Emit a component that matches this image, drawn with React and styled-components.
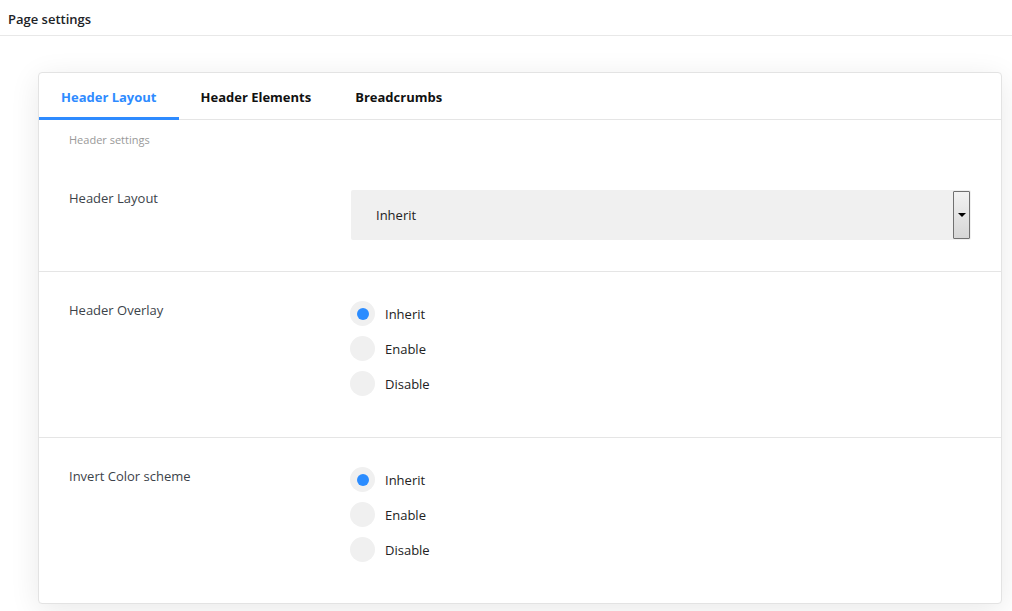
import { createGlobalStyle, styled } from 'styled-components';

const GlobalStyle = createGlobalStyle`
    html, body {
        margin: 0;
        padding: 0;
        background: #ffffff;
        font-family: 'Segoe UI', 'Open Sans', 'Noto Sans', sans-serif;
        color: #444;
    }
    * {
        box-sizing: border-box;
    }
`;

const TopBar = styled.div`
    height: 36px;
    display: flex;
    align-items: center;
    padding: 2px 8px 0;
    border-bottom: 1px solid #e8e8e8;
    font-size: 13px;
    font-weight: 600;
    color: #1d2327;
`;

const Main = styled.div`
    padding: 36px 10px 20px 38px;
`;

const Card = styled.div`
    background: #fff;
    border: 1px solid #e3e3e3;
    border-radius: 4px;
    box-shadow: 0 6px 30px rgba(0, 0, 0, 0.09);
`;

const Tabs = styled.div`
    display: flex;
    border-bottom: 1px solid #e5e5e5;
    height: 47px;
`;

const Tab = styled.div`
    display: flex;
    align-items: center;
    padding: 3px 22px 0 22px;
    font-size: 13px;
    font-weight: 700;
    color: ${(props) => (props.active ? '#2e8bff' : '#111')};
    border-bottom: 3px solid
        ${(props) => (props.active ? '#2e8bff' : 'transparent')};
    margin-bottom: -1px;
`;

const GroupTitle = styled.div`
    padding: 12px 30px 0;
    height: 40px;
    font-size: 11px;
    color: #999;
`;

const Section = styled.div`
    display: grid;
    grid-template-columns: 282px 1fr;
    padding: ${(props) => (props.radios ? '30px 30px 41px' : '30px 30px 31px')};
    border-bottom: ${(props) => (props.last ? 'none' : '1px solid #e5e5e5')};
`;

const Label = styled.div`
    font-size: 13px;
    line-height: 16px;
    color: #3c434a;
`;

const Select = styled.div`
    height: 50px;
    display: flex;
    align-items: center;
    justify-content: space-between;
    background: #f0f0f0;
    border-radius: 2px;
    padding: 0 1px 0 25px;
    font-size: 13px;
    color: #222;
`;

const ArrowButton = styled.div`
    width: 17px;
    height: 48px;
    border: 1px solid #707070;
    border-radius: 1px;
    background: linear-gradient(#f2f2f2, #d6d6d6);
    display: flex;
    align-items: center;
    justify-content: center;
    &::after {
        content: '';
        border-left: 4px solid transparent;
        border-right: 4px solid transparent;
        border-top: 4px solid #000;
    }
`;

const RadioList = styled.div`
    display: flex;
    flex-direction: column;
    gap: 10px;
    margin-top: -1px;
    margin-left: -1px;
`;

const RadioRow = styled.div`
    display: flex;
    align-items: center;
    gap: 10px;
    font-size: 13px;
    color: #222;
`;

const RadioCircle = styled.span`
    width: 25px;
    height: 25px;
    border-radius: 50%;
    background: #f0f0f0;
    display: flex;
    align-items: center;
    justify-content: center;
    &::after {
        content: '';
        width: 12px;
        height: 12px;
        border-radius: 50%;
        background: ${(props) => (props.checked ? '#2b8cff' : 'transparent')};
    }
`;

const options = ['Inherit', 'Enable', 'Disable'];

function RadioGroup({ value }) {
    return (
        <RadioList>
            {options.map((opt) => (
                <RadioRow key={opt}>
                    <RadioCircle checked={opt === value} />
                    {opt}
                </RadioRow>
            ))}
        </RadioList>
    );
}

export default function App() {
    return (
        <>
            <GlobalStyle />
            <TopBar>Page settings</TopBar>
            <Main>
                <Card>
                    <Tabs>
                        <Tab active>Header Layout</Tab>
                        <Tab>Header Elements</Tab>
                        <Tab>Breadcrumbs</Tab>
                    </Tabs>
                    <GroupTitle>Header settings</GroupTitle>
                    <Section>
                        <Label>Header Layout</Label>
                        <Select>
                            Inherit
                            <ArrowButton />
                        </Select>
                    </Section>
                    <Section radios>
                        <Label>Header Overlay</Label>
                        <RadioGroup value="Inherit" />
                    </Section>
                    <Section radios last>
                        <Label>Invert Color scheme</Label>
                        <RadioGroup value="Inherit" />
                    </Section>
                </Card>
            </Main>
        </>
    );
}
